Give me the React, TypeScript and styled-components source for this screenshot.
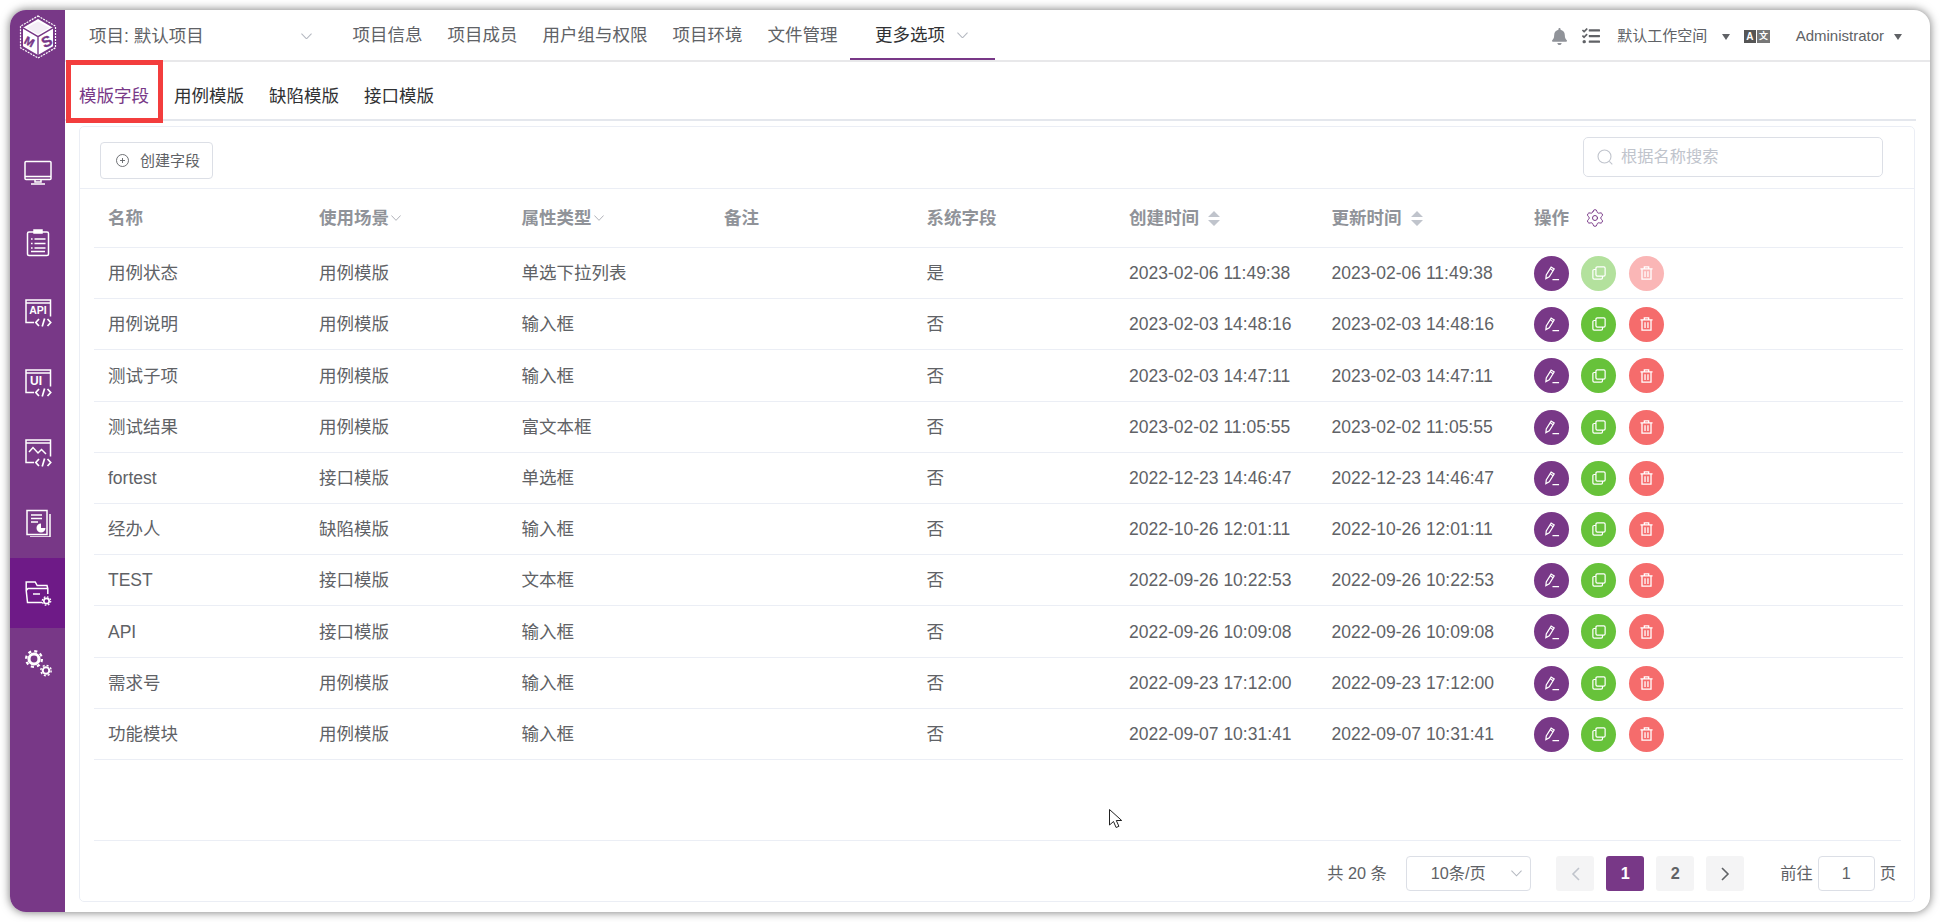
import { ReactNode } from "react";
import styled, { createGlobalStyle } from "styled-components";
import { Settings } from "lucide-react";
import { FaBell, FaTasks } from "react-icons/fa";

const purple = "#783887";

const GlobalStyle = createGlobalStyle`
  html, body {
    margin: 0;
    padding: 0;
    background: #fff;
    font-family: "Liberation Sans", "Noto Sans CJK SC", sans-serif;
  }
  * { box-sizing: border-box; }
`;

const Shell = styled.div`
  position: relative;
  display: flex;
  width: 1920px;
  height: 902px;
  margin: 10px;
  border-radius: 16px;
  background: #fff;
  box-shadow: 0 0 10px rgba(0, 0, 0, 0.55);
  overflow: hidden;
`;

const Sidebar = styled.aside`
  flex: 0 0 55px;
  background: ${purple};
`;

const LogoBox = styled.div`
  display: flex;
  justify-content: center;
  height: 52px;
  padding-top: 5px;
  margin-bottom: 76px;
`;

const SideItem = styled.div<{ $active?: boolean }>`
  display: flex;
  align-items: center;
  justify-content: center;
  height: 70px;
  background: ${p => (p.$active ? "#6e1a87" : "transparent")};
`;

const Main = styled.main`
  flex: 1;
  min-width: 0;
  display: flex;
  flex-direction: column;
`;

const Header = styled.header`
  display: flex;
  align-items: stretch;
  height: 52px;
  border-bottom: 2px solid #e8e8ea;
  color: #606266;
`;

const ProjectSelect = styled.div`
  flex: 0 0 275px;
  display: flex;
  align-items: center;
  justify-content: space-between;
  padding: 2px 28px 0 24px;
  font-size: 17.5px;
  line-height: 24px;
`;

const NavItem = styled.div<{ $active?: boolean }>`
  display: flex;
  align-items: center;
  gap: 12px;
  height: 50px;
  padding: 2px ${p => (p.$active ? "27px" : "12.5px")} 0 ${p => (p.$active ? "25px" : "12.5px")};
  font-size: 17.5px;
  line-height: 24px;
  white-space: nowrap;
  color: ${p => (p.$active ? "#303133" : "#606266")};
  border-bottom: 2px solid ${p => (p.$active ? purple : "transparent")};
`;

const HeaderRight = styled.div`
  margin-left: auto;
  display: flex;
  align-items: center;
  height: 50px;
  padding: 2px 28px 0 0;
  font-size: 15px;
  line-height: 20px;
`;

const HeaderIcon = styled.span<{ $gap: number; $color: string }>`
  display: flex;
  margin-right: ${p => p.$gap}px;
  color: ${p => p.$color};
`;

const Caret = styled.span<{ $left: number; $right: number }>`
  width: 0;
  height: 0;
  margin: 2px ${p => p.$right}px 0 ${p => p.$left}px;
  border-left: 4.5px solid transparent;
  border-right: 4.5px solid transparent;
  border-top: 6px solid #606266;
`;

const LangBadge = styled.span`
  display: flex;
  gap: 1px;
  margin-right: 26px;
`;

const LangCell = styled.span<{ $dark?: boolean }>`
  width: 12.5px;
  height: 13px;
  display: flex;
  align-items: center;
  justify-content: center;
  background: ${p => (p.$dark ? "#555" : "#777")};
  color: #fff;
  font-size: ${p => (p.$dark ? "10px" : "9px")};
  font-weight: 700;
  line-height: 13px;
`;

const TabBar = styled.div`
  display: flex;
  gap: 25px;
  height: 59px;
  margin-right: 14px;
  padding: 0 0 0 14px;
  border-bottom: 2px solid #e4e7ed;
`;

const Tab = styled.div<{ $active?: boolean }>`
  padding-top: 22px;
  font-size: 17.5px;
  line-height: 24px;
  color: ${p => (p.$active ? purple : "#303133")};
`;

const Card = styled.section`
  flex: 1;
  min-height: 0;
  display: flex;
  flex-direction: column;
  margin: 5px 15px 10px 14px;
  border: 1px solid #ebeef5;
  border-radius: 5px;
`;

const Toolbar = styled.div`
  flex: 0 0 62px;
  display: flex;
  align-items: flex-start;
  justify-content: space-between;
  padding: 0 31px 0 20px;
  border-bottom: 1px solid #ebeef5;
`;

const CreateButton = styled.div`
  display: flex;
  align-items: center;
  gap: 11px;
  height: 37px;
  margin-top: 15px;
  padding: 0 12px 0 15px;
  border: 1px solid #dcdfe6;
  border-radius: 4px;
  font-size: 15px;
  line-height: 20px;
  color: #606266;
`;

const SearchBox = styled.label`
  display: flex;
  align-items: center;
  gap: 8px;
  width: 300px;
  height: 39.5px;
  margin-top: 10px;
  padding-left: 13px;
  border: 1px solid #dcdfe6;
  border-radius: 5px;
`;

const SearchInput = styled.input`
  flex: 1;
  min-width: 0;
  border: 0;
  outline: 0;
  padding: 0;
  font: inherit;
  font-size: 16.25px;
  &::placeholder {
    color: #c0c4cc;
    opacity: 1;
  }
`;

const Table = styled.table`
  width: 1809px;
  margin-left: 14px;
  border-collapse: separate;
  border-spacing: 0;
  table-layout: fixed;
`;

const HeadCell = styled.th`
  height: 59px;
  padding: 0 0 0 14px;
  border-bottom: 1px solid #ebeef5;
  text-align: left;
  font-size: 17.5px;
  line-height: 24px;
  font-weight: 700;
  color: #909399;
  white-space: nowrap;
`;

const HeadInner = styled.span`
  display: inline-flex;
  align-items: center;
`;

const FilterMark = styled.span`
  display: flex;
  margin-left: 2px;
`;

const GearMark = styled(Settings)`
  margin-left: 16px;
`;

const SortMark = styled.svg`
  margin-left: 9px;
`;

// rows are 51.2px in the source, snapped to whole pixels here
const Row = styled.tr`
  &:nth-child(5n + 3) td {
    height: 52px;
  }
`;

const Cell = styled.td`
  height: 51px;
  padding: 0 0 0 14px;
  border-bottom: 1px solid #ebeef5;
  font-size: 17.5px;
  line-height: 24px;
  color: #606266;
  white-space: nowrap;
`;

const Actions = styled.div`
  display: flex;
  gap: 12.4px;
`;

const RoundButton = styled.span<{ $color: string }>`
  width: 35px;
  height: 35px;
  display: flex;
  align-items: center;
  justify-content: center;
  border-radius: 50%;
  background: ${p => p.$color};
`;

const Footer = styled.footer`
  margin: auto 13px 0 14px;
  height: 61px;
  display: flex;
  align-items: flex-start;
  justify-content: flex-end;
  padding: 15px 5px 0 0;
  border-top: 1px solid #ebeef5;
  font-size: 16.25px;
  line-height: 35px;
  color: #606266;
`;

const Total = styled.span`
  margin-right: 19px;
`;

const SizeSelect = styled.div`
  display: flex;
  align-items: center;
  justify-content: space-between;
  width: 125px;
  height: 35px;
  margin-right: 25.5px;
  padding: 0 8px 0 24px;
  border: 1px solid #dcdfe6;
  border-radius: 4px;
`;

const Pager = styled.div`
  display: flex;
  gap: 12px;
  margin-right: 36px;
`;

const PageButton = styled.span<{ $active?: boolean }>`
  width: 38px;
  height: 35px;
  display: flex;
  align-items: center;
  justify-content: center;
  border-radius: 3px;
  font-weight: 700;
  background: ${p => (p.$active ? purple : "#f4f4f5")};
  color: ${p => (p.$active ? "#fff" : "#606266")};
`;

const JumpInput = styled.input`
  width: 57px;
  height: 35px;
  margin: 0 5px;
  padding: 0;
  border: 1px solid #dcdfe6;
  border-radius: 4px;
  outline: 0;
  text-align: center;
  font: inherit;
  font-size: 16.25px;
  color: #606266;
`;

// annotation drawn on top of the screenshot
const RedMark = styled.div`
  position: absolute;
  left: 56px;
  top: 50px;
  width: 97px;
  height: 63px;
  border: 5px solid #f33d3d;
`;

const MouseCursor = styled.svg`
  position: absolute;
  left: 1098px;
  top: 798px;
`;

function Chevron({ size = 11, color = "#b4b8c0" }: { size?: number; color?: string }) {
  return (
    <svg width={size} height={size * 0.6} viewBox="0 0 12 7" fill="none" stroke={color} strokeWidth="1.1">
      <path d="M.5.5 6 6.3 11.5.5" />
    </svg>
  );
}

function SortCaret() {
  return (
    <SortMark width="12" height="15" viewBox="0 0 12 15" fill="#c0c4cc">
      <path d="M6 0l6 6H0zM6 15L0 9h12z" />
    </SortMark>
  );
}

function SideSvg({ children }: { children: ReactNode }) {
  return (
    <svg width="28" height="28" viewBox="0 0 28 28" fill="none" stroke="#fff" strokeWidth="1.5">
      {children}
    </svg>
  );
}

function CodeMark() {
  return (
    <g strokeWidth="1.7">
      <path d="M15 20l-3.2 3.5 3.2 3.5M23.5 20l3.2 3.5-3.2 3.5M20.6 19.5l-2.4 8" />
    </g>
  );
}

function WindowFrame({ children }: { children: ReactNode }) {
  return (
    <SideSvg>
      <path d="M10 23.5H2V1h24.5v16.5M2 4h24.5" />
      <CodeMark />
      {children}
    </SideSvg>
  );
}

function Gear({ cx, cy, r }: { cx: number; cy: number; r: number }) {
  const outer = r * 0.92;
  const dash = (2 * Math.PI * outer) / 16;
  return (
    <g>
      <circle cx={cx} cy={cy} r={r * 0.58} strokeWidth={r * 0.36} />
      <circle cx={cx} cy={cy} r={outer} strokeWidth={r * 0.26} strokeDasharray={`${dash} ${dash}`} />
    </g>
  );
}

const sideIcons: ReactNode[] = [
  <SideSvg key="monitor">
    <rect x="1" y="2.5" width="26" height="18" rx="1" />
    <path d="M1 17.5h26M11 21v2h6v-2M7 25h14" />
  </SideSvg>,
  <SideSvg key="clipboard">
    <rect x="3.5" y="3" width="21" height="23.5" rx="1.5" />
    <rect x="10" y="1" width="8" height="3" fill="#fff" />
    <path d="M7 10h1.6M10.5 10h11M7 14.5h1.6M10.5 14.5h11M7 19h1.6M10.5 19h11M7 22.5h14" />
  </SideSvg>,
  <WindowFrame key="api">
    <text x="14" y="15.2" textAnchor="middle" fontSize="10.5" fontWeight="700" fill="#fff" stroke="none" fontFamily="Liberation Sans">
      API
    </text>
  </WindowFrame>,
  <WindowFrame key="ui">
    <text x="12" y="16" textAnchor="middle" fontSize="12" fontWeight="700" fill="#fff" stroke="none" fontFamily="Liberation Sans">
      UI
    </text>
  </WindowFrame>,
  <WindowFrame key="perf">
    <path d="M5 13l4-4.5 5 5.5 3.5-3.5 4.5 4.5" />
  </WindowFrame>,
  <SideSvg key="report">
    <rect x="3" y="1.5" width="20" height="24" />
    <path d="M26 5v23H6" />
    <path d="M7 6h11M7 9.5h11M7 13h7" />
    <path d="M17 14.5a4.5 4.5 0 1 0 4.5 4.5H17z" fill="#fff" stroke="none" />
  </SideSvg>,
  <SideSvg key="project">
    <path d="M18 23.5H3.5L2.2 11.5V3h9l2 3.5H23l.8 3v5.5M2.2 11.5L4 9.5h20" />
    <path d="M9 15h7" />
    <Gear cx={22.5} cy={22} r={4.6} />
  </SideSvg>,
  <SideSvg key="settings">
    <Gear cx={10} cy={10} r={8.6} />
    <Gear cx={22} cy={21.5} r={5.6} />
  </SideSvg>,
];

function Logo() {
  return (
    <svg width="38" height="44" viewBox="0 0 38 44">
      <path d="M19 1l17.5 10.2v21.6L19 43 1.5 32.8V11.2z" fill="none" stroke="#fff" strokeWidth="1.2" strokeDasharray="2 1" />
      <path d="M19 4l15 8.8v18.4L19 40 4 31.2V12.8z" fill="#fff" />
      <path d="M4 12.8L19 21.6 34 12.8M19 21.6V40" fill="none" stroke={purple} strokeWidth="1.4" />
      <path d="M19 6.5l11.5 6.3L19 19.3 7.5 12.8z" fill="#f4eef6" />
      <g fontFamily="Liberation Sans" fontWeight="700" fill={purple}>
        <text x="5.6" y="31" fontSize="11.5" transform="rotate(28 11 27)" stroke={purple} strokeWidth="0.4">M</text>
        <text x="23" y="32" fontSize="15" transform="rotate(-26 27 27)" stroke={purple} strokeWidth="0.4">S</text>
      </g>
    </svg>
  );
}

function EditIcon() {
  return (
    <svg width="16" height="16" viewBox="0 0 17 17" fill="none" stroke="#fff" strokeWidth="1.3">
      <path d="M2 14.5l.4-4L7.6 2.2l3.2 2L5.6 12.5z" />
      <path d="M6.4 3.8l3.2 2.2M9 15.5h7" />
    </svg>
  );
}

function CopyIcon() {
  return (
    <svg width="14" height="14" viewBox="0 0 16 16" fill="none" stroke="#fff" strokeWidth="1.4">
      <rect x="4.5" y="1" width="10.5" height="10.5" rx="1.5" />
      <path d="M4.5 4H2.5A1.5 1.5 0 0 0 1 5.5v8A1.5 1.5 0 0 0 2.5 15h8a1.5 1.5 0 0 0 1.5-1.5v-2" />
    </svg>
  );
}

function TrashIcon() {
  return (
    <svg width="13" height="14" viewBox="0 0 15 16" fill="none" stroke="#fff" strokeWidth="1.5">
      <path d="M.5 3.2h14M5 3V1h5v2M2.3 3.2V15h10.4V3.2M5.8 6v6.5M9.2 6v6.5" />
    </svg>
  );
}

function PlusCircle() {
  return (
    <svg width="13" height="13" viewBox="0 0 13 13" fill="none" stroke="#606266" strokeWidth="0.9">
      <circle cx="6.5" cy="6.5" r="6" />
      <path d="M6.5 4v5M4 6.5h5" />
    </svg>
  );
}

function SearchGlyph() {
  return (
    <svg width="16" height="16" viewBox="0 0 16 16" fill="none" stroke="#c0c4cc" strokeWidth="1.1">
      <circle cx="7.5" cy="7.5" r="6.5" />
      <path d="M12.3 12.3l3 3" />
    </svg>
  );
}

const navItems = ["项目信息", "项目成员", "用户组与权限", "项目环境", "文件管理"];
const tabs = ["模版字段", "用例模版", "缺陷模版", "接口模版"];

const columns = [
  { title: "名称", width: 211 },
  { title: "使用场景", width: 202.5, filter: true },
  { title: "属性类型", width: 202.5, filter: true },
  { title: "备注", width: 202.5 },
  { title: "系统字段", width: 202.5 },
  { title: "创建时间", width: 202.5, sort: true },
  { title: "更新时间", width: 202.5, sort: true },
  { title: "操作", width: 383, gear: true },
];

const rows = [
  ["用例状态", "用例模版", "单选下拉列表", "是", "2023-02-06 11:49:38"],
  ["用例说明", "用例模版", "输入框", "否", "2023-02-03 14:48:16"],
  ["测试子项", "用例模版", "输入框", "否", "2023-02-03 14:47:11"],
  ["测试结果", "用例模版", "富文本框", "否", "2023-02-02 11:05:55"],
  ["fortest", "接口模版", "单选框", "否", "2022-12-23 14:46:47"],
  ["经办人", "缺陷模版", "输入框", "否", "2022-10-26 12:01:11"],
  ["TEST", "接口模版", "文本框", "否", "2022-09-26 10:22:53"],
  ["API", "接口模版", "输入框", "否", "2022-09-26 10:09:08"],
  ["需求号", "用例模版", "输入框", "否", "2022-09-23 17:12:00"],
  ["功能模块", "用例模版", "输入框", "否", "2022-09-07 10:31:41"],
];

export default function App() {
  return (
    <Shell>
      <GlobalStyle />
      <Sidebar>
        <LogoBox>
          <Logo />
        </LogoBox>
        {sideIcons.map((icon, index) => (
          <SideItem key={index} $active={index === 6}>
            {icon}
          </SideItem>
        ))}
      </Sidebar>
      <Main>
        <Header>
          <ProjectSelect>
            <span>项目: 默认项目</span>
            <Chevron />
          </ProjectSelect>
          {navItems.map(item => (
            <NavItem key={item}>{item}</NavItem>
          ))}
          <NavItem $active>
            更多选项
            <Chevron />
          </NavItem>
          <HeaderRight>
            <HeaderIcon $gap={14} $color="#909399">
              <FaBell size={17} />
            </HeaderIcon>
            <HeaderIcon $gap={17} $color="#606266">
              <FaTasks size={18} />
            </HeaderIcon>
            默认工作空间
            <Caret $left={14.5} $right={14} />
            <LangBadge>
              <LangCell $dark>A</LangCell>
              <LangCell>文</LangCell>
            </LangBadge>
            Administrator
            <Caret $left={10} $right={0} />
          </HeaderRight>
        </Header>
        <TabBar>
          {tabs.map((tab, index) => (
            <Tab key={tab} $active={index === 0}>
              {tab}
            </Tab>
          ))}
        </TabBar>
        <Card>
          <Toolbar>
            <CreateButton>
              <PlusCircle />
              创建字段
            </CreateButton>
            <SearchBox>
              <SearchGlyph />
              <SearchInput placeholder="根据名称搜索" readOnly />
            </SearchBox>
          </Toolbar>
          <Table>
            <colgroup>
              {columns.map(col => (
                <col key={col.title} width={col.width} />
              ))}
            </colgroup>
            <thead>
              <tr>
                {columns.map(col => (
                  <HeadCell key={col.title}>
                    <HeadInner>
                      {col.title}
                      {col.filter && (
                        <FilterMark>
                          <Chevron size={10} color="#a8abb2" />
                        </FilterMark>
                      )}
                      {col.sort && <SortCaret />}
                      {col.gear && <GearMark size={20} color={purple} strokeWidth={1.2} />}
                    </HeadInner>
                  </HeadCell>
                ))}
              </tr>
            </thead>
            <tbody>
              {rows.map((row, index) => (
                <Row key={row[0]}>
                  <Cell>{row[0]}</Cell>
                  <Cell>{row[1]}</Cell>
                  <Cell>{row[2]}</Cell>
                  <Cell />
                  <Cell>{row[3]}</Cell>
                  <Cell>{row[4]}</Cell>
                  <Cell>{row[4]}</Cell>
                  <Cell>
                    <Actions>
                      <RoundButton $color={purple}>
                        <EditIcon />
                      </RoundButton>
                      <RoundButton $color={index === 0 ? "#b3e19d" : "#67c23a"}>
                        <CopyIcon />
                      </RoundButton>
                      <RoundButton $color={index === 0 ? "#fab6b6" : "#f56c6c"}>
                        <TrashIcon />
                      </RoundButton>
                    </Actions>
                  </Cell>
                </Row>
              ))}
            </tbody>
          </Table>
          <Footer>
            <Total>共 20 条</Total>
            <SizeSelect>
              10条/页
              <Chevron />
            </SizeSelect>
            <Pager>
              <PageButton>
                <svg width="9" height="14" viewBox="0 0 9 14" fill="none" stroke="#c0c4cc" strokeWidth="1.6">
                  <path d="M8 1L2 7l6 6" />
                </svg>
              </PageButton>
              <PageButton $active>1</PageButton>
              <PageButton>2</PageButton>
              <PageButton>
                <svg width="9" height="14" viewBox="0 0 9 14" fill="none" stroke="#606266" strokeWidth="1.6">
                  <path d="M1 1l6 6-6 6" />
                </svg>
              </PageButton>
            </Pager>
            前往
            <JumpInput value="1" readOnly />页
          </Footer>
        </Card>
      </Main>
      <RedMark />
      <MouseCursor width="16" height="22" viewBox="0 0 16 22">
        <path d="M1.5 1.5v15.5l4-3.5 2.6 6 2.8-1.2-2.6-5.8h5.4z" fill="#fff" stroke="#222" strokeWidth="1" />
      </MouseCursor>
    </Shell>
  );
}
